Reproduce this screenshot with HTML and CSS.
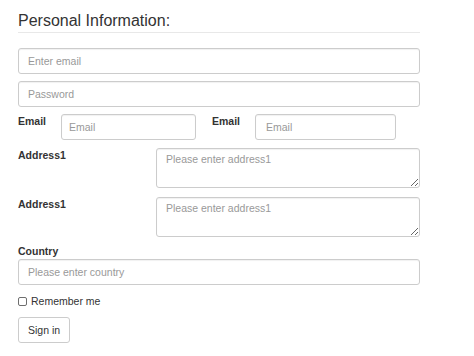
FILE: index.html
```html
<!DOCTYPE html>
<html lang="en">
<head>
    <meta charset="UTF-8">
    <meta name="viewport" content="width=device-width, initial-scale=1.0">
    <title>Personal Information</title>
    <link rel="stylesheet" href="styles.css">
</head>
<body>
    <form class="form">
        <div class="legend">Personal Information:</div>

        <input class="field" type="email" placeholder="Enter email">
        <input class="field" type="password" placeholder="Password">

        <div class="pair-row">
            <div class="pair">
                <label class="label pair-label">Email</label>
                <input class="field pair-first" type="email" placeholder="Email">
            </div>
            <div class="pair">
                <label class="label pair-label">Email</label>
                <input class="field pair-second" type="email" placeholder="Email">
            </div>
        </div>

        <div class="area-row">
            <label class="label area-label">Address1</label>
            <textarea class="area" placeholder="Please enter address1"></textarea>
        </div>
        <div class="area-row">
            <label class="label area-label">Address1</label>
            <textarea class="area" placeholder="Please enter address1"></textarea>
        </div>

        <label class="label country-label">Country</label>
        <input class="field country" type="text" placeholder="Please enter country">

        <label class="check-row">
            <input class="check" type="checkbox">
            <span>Remember me</span>
        </label>

        <button class="btn" type="button">Sign in</button>
    </form>
</body>
</html>
```

FILE: styles.css
```css
* {
    box-sizing: border-box;
}

body {
    margin: 0;
    background-color: #FFFFFF;
    font-family: "Liberation Sans", Arial, sans-serif;
    font-size: 10.5px;
    line-height: 15px;
    color: #333333;
}

.form {
    width: 402px;
    margin-left: 18px;
    padding-top: 10px;
    display: flex;
    flex-direction: column;
}

.legend {
    font-size: 16px;
    line-height: 22px;
    color: #333333;
    border-bottom: 1px solid #E8E8E8;
    margin-bottom: 15px;
}

.field {
    display: block;
    width: 100%;
    height: 26px;
    padding: 0 9px;
    font-family: inherit;
    font-size: 10.5px;
    color: #555555;
    background-color: #FFFFFF;
    border: 1px solid #CCCCCC;
    border-radius: 3px;
    box-shadow: inset 0 1px 1px rgba(0, 0, 0, 0.06);
    outline: none;
    margin: 0 0 7px 0;
}

.field::placeholder,
.area::placeholder {
    color: #999999;
}

.label {
    font-weight: bold;
    color: #333333;
}

.pair-row {
    display: flex;
    gap: 16px;
    margin-bottom: 8px;
}

.pair {
    display: flex;
    align-items: flex-start;
}

.pair-label {
    width: 43px;
}

.pair .field {
    margin: 0;
}

.pair-first {
    width: 135px;
    padding-left: 7px;
}

.pair-second {
    width: 141px;
    padding-left: 10px;
}

.area-row {
    display: flex;
    align-items: flex-start;
    margin-bottom: 9px;
}

.area-label {
    width: 138px;
    padding-top: 0;
}

.area {
    flex: 1;
    height: 40px;
    padding: 3px 9px;
    font-family: inherit;
    font-size: 10.5px;
    line-height: 15px;
    color: #555555;
    border: 1px solid #CCCCCC;
    border-radius: 3px;
    box-shadow: inset 0 1px 1px rgba(0, 0, 0, 0.06);
    outline: none;
    resize: vertical;
}

.country-label {
    margin-top: -2px;
    display: block;
}

.country {
    margin-bottom: 9px;
}

.check-row {
    display: flex;
    align-items: center;
    gap: 4px;
}

.check {
    appearance: none;
    width: 9px;
    height: 9px;
    margin: 0;
    border: 1px solid #6E6E6E;
    border-radius: 2px;
    background-color: #FFFFFF;
}

.btn {
    align-self: flex-start;
    margin-top: 8px;
    height: 26px;
    padding: 0 9px;
    font-family: inherit;
    font-size: 10.5px;
    color: #333333;
    background-color: #FFFFFF;
    border: 1px solid #CCCCCC;
    border-radius: 3px;
    cursor: pointer;
}
```
